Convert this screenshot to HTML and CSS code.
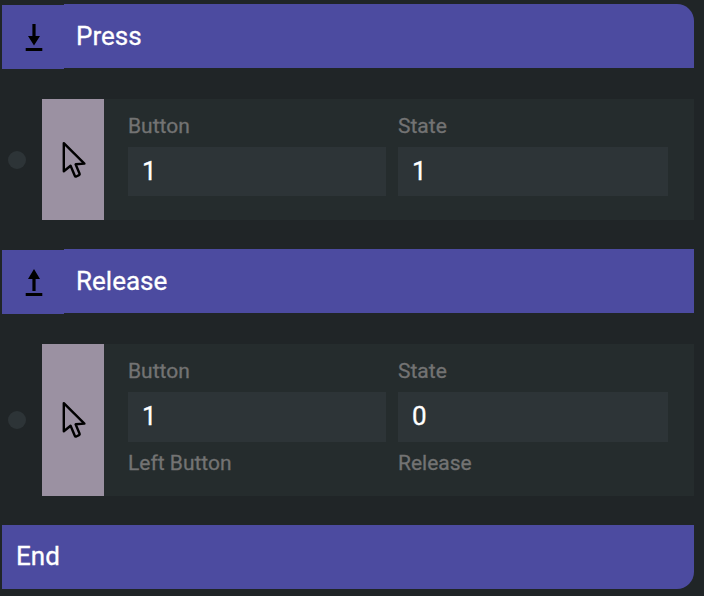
FILE: index.html
```html
<!DOCTYPE html>
<html lang="en">
<head>
<meta charset="utf-8">
<title>Mouse events</title>
<link rel="stylesheet" href="styles.css">
</head>
<body>
<main class="chain">
  <header class="bar bar-first">
    <div class="bar-icon">
      <svg width="18" height="28" viewBox="0 0 18 28"><path d="M7.4 0h3.2v12H15L9 21.500 3 12h4.400zM.7 24h16.600v3H.7z"/></svg>
    </div>
    <h2 class="bar-title">Press</h2>
  </header>
  <section class="event">
    <span class="dot"></span>
    <div class="card">
      <div class="card-icon">
        <svg width="26" height="40" viewBox="0 0 26 40"><path class="cursor" d="M2.800 3.200V31.200L9.600 25.800 13.800 35.800Q14.200 36.800 15.200 36.500L18 35.200Q19 34.800 18.600 33.800L14.600 24.300 23.400 23.600Z"/></svg>
      </div>
      <div class="fields">
        <label class="field"><span class="label">Button</span><input class="input" value="1"></label>
        <label class="field"><span class="label">State</span><input class="input" value="1"></label>
      </div>
    </div>
  </section>
  <header class="bar">
    <div class="bar-icon">
      <svg width="18" height="28" viewBox="0 0 18 28"><path d="M9 0L15 10H10.600V22H7.400V10H3zM.7 24h16.600v3H.7z"/></svg>
    </div>
    <h2 class="bar-title">Release</h2>
  </header>
  <section class="event event-tall">
    <span class="dot"></span>
    <div class="card">
      <div class="card-icon">
        <svg width="26" height="40" viewBox="0 0 26 40"><path class="cursor" d="M2.800 3.200V31.200L9.600 25.800 13.800 35.800Q14.200 36.800 15.200 36.500L18 35.200Q19 34.800 18.600 33.800L14.600 24.300 23.400 23.600Z"/></svg>
      </div>
      <div class="fields">
        <label class="field"><span class="label">Button</span><input class="input" value="1"><span class="hint">Left Button</span></label>
        <label class="field"><span class="label">State</span><input class="input" value="0"><span class="hint">Release</span></label>
      </div>
    </div>
  </section>
  <footer class="bar bar-last">
    <h2 class="bar-title bar-title-plain">End</h2>
  </footer>
</main>
</body>
</html>
```
FILE: styles.css
```css
* { box-sizing: border-box; }
body {
  margin: 0;
  background: #202527;
  font-family: Roboto, sans-serif;
  -webkit-text-stroke: 0.3px;
}
.chain { padding: 4px 10px 0 2px; }
.bar {
  display: flex;
  height: 64px;
  background: #4c4ba0;
}
.bar-first { border-top-right-radius: 17px; }
.bar-last { border-bottom-right-radius: 17px; }
.bar-icon {
  display: flex;
  align-items: center;
  justify-content: center;
  width: 62px;
  height: 64px;
  margin-top: 1px;
  padding: 2px 0 0 2px;
  background: #4c4ba0;
  box-shadow: 0 -1px 0 #202527;
}
.bar-title {
  margin: 0;
  padding-left: 12px;
  color: #fff;
  font-size: 26px;
  font-weight: 400;
  line-height: 64px;
}
.bar-title-plain { padding-left: 14px; line-height: 62px; }
.event {
  display: flex;
  align-items: center;
  height: 121px;
  margin: 31px 0 29px;
}
.event-tall { height: 152px; }
.dot {
  width: 18px;
  height: 18px;
  margin: 0 16px 0 6px;
  border-radius: 50%;
  background: #2d3437;
}
.card {
  display: flex;
  flex: 1;
  height: 100%;
  background: #252c2d;
}
.card-icon {
  display: flex;
  align-items: center;
  justify-content: center;
  width: 62px;
  padding-left: 2px;
  background: #9b91a2;
}
.cursor {
  fill: none;
  stroke: #000;
  stroke-width: 2.4;
  stroke-linejoin: round;
}
.fields {
  display: grid;
  flex: 1;
  grid-template-columns: 258px 270px;
  gap: 12px;
  padding: 14px 26px 0 24px;
}
.field { display: flex; flex-direction: column; }
.label, .hint {
  color: #737373;
  font-size: 21px;
  line-height: 26px;
}
.label { margin-bottom: 8px; }
.hint { margin-top: 8px; }
.input {
  width: 100%;
  height: 49px;
  padding: 0 14px 2px;
  border: 0;
  border-radius: 0;
  background: #2d3437;
  color: #fff;
  font: 26px Roboto, sans-serif;
}
.event-tall .input { height: 50px; }
```
